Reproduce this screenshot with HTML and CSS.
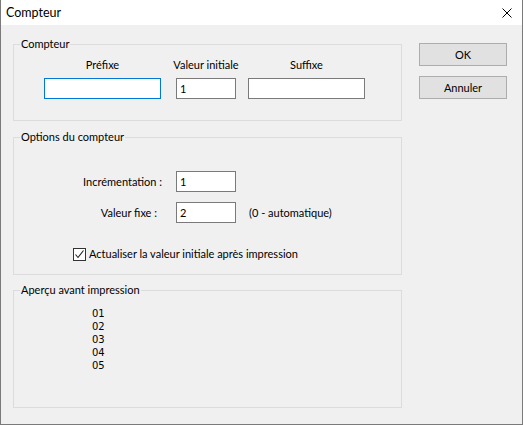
FILE: index.html
```html
<!DOCTYPE html>
<html lang="fr">
<head>
<meta charset="utf-8">
<title>Compteur</title>
<link rel="stylesheet" href="styles.css">
</head>
<body>
<div class="window">
  <div class="titlebar">
    <span class="title">Compteur</span>
    <svg class="close" width="10" height="10" viewBox="0 0 10 10"><path d="M0.5 0.5 L9.5 9.5 M9.5 0.5 L0.5 9.5" stroke="#000" stroke-width="1" fill="none"/></svg>
  </div>
  <div class="client">
    <div class="groups">
      <fieldset class="group g1">
        <legend>Compteur</legend>
        <div class="fields">
          <div class="field wide">
            <span class="flabel">Préfixe</span>
            <div class="edit focus"></div>
          </div>
          <div class="field narrow">
            <span class="flabel">Valeur initiale</span>
            <div class="edit">1</div>
          </div>
          <div class="field wide">
            <span class="flabel">Suffixe</span>
            <div class="edit"></div>
          </div>
        </div>
      </fieldset>
      <fieldset class="group g2">
        <legend>Options du compteur</legend>
        <div class="opts">
          <span class="olabel">Incrémentation :</span>
          <div class="edit">1</div>
          <span></span>
          <span class="olabel l2">Valeur fixe :</span>
          <div class="edit">2</div>
          <span class="hint">(0 - automatique)</span>
        </div>
        <div class="check">
          <span class="box"><svg width="11" height="11" viewBox="0 0 11 11"><path d="M1.5 5.5 L4 8.5 L9.5 1.5" stroke="#222" stroke-width="1.1" fill="none"/></svg></span>
          <span>Actualiser la valeur initiale après impression</span>
        </div>
      </fieldset>
      <fieldset class="group g3">
        <legend>Aperçu avant impression</legend>
        <div class="preview">
          <div>01</div>
          <div>02</div>
          <div>03</div>
          <div>04</div>
          <div>05</div>
        </div>
      </fieldset>
    </div>
    <div class="buttons">
      <div class="btn">OK</div>
      <div class="btn">Annuler</div>
    </div>
  </div>
</div>
</body>
</html>
```
FILE: styles.css
```css
html, body {
  margin: 0;
  padding: 0;
}
body {
  width: 523px;
  height: 425px;
  overflow: hidden;
  font-family: "Lato", "Liberation Sans", sans-serif;
  font-size: 11px;
  color: #000;
}
.window {
  box-sizing: border-box;
  width: 523px;
  height: 425px;
  border: 1px solid #7a7a7a;
  border-top: none;
  background: #f0f0f0;
  display: flex;
  flex-direction: column;
}
.titlebar {
  height: 25px;
  background: #fff;
  display: flex;
  align-items: center;
  justify-content: space-between;
  padding: 0 10px 0 5px;
}
.title {
  font-size: 12.5px;
  line-height: 16px;
  margin-top: 1px;
}
.close {
  display: block;
  margin-top: 1px;
}
.client {
  display: flex;
  padding-left: 12px;
  gap: 17px;
}
.groups {
  display: flex;
  flex-direction: column;
  width: 389px;
}
.group {
  box-sizing: border-box;
  width: 389px;
  margin: 0;
  border: 1px solid #dcdcdc;
  padding: 0;
  min-inline-size: 0;
}
.group legend {
  margin-left: 6px;
  padding: 0 1px;
  line-height: 14px;
  font-size: 11px;
}
.g1 {
  margin-top: 12px;
  padding: 6px 0 21px 0;
}
.g2 {
  margin-top: 9px;
  padding: 27px 0 12px 0;
}
.g3 {
  margin-top: 8px;
  padding: 10px 0 35px 0;
}
.fields {
  display: flex;
  margin-left: 30px;
}
.field {
  display: flex;
  flex-direction: column;
  align-items: center;
}
.field.wide { width: 117px; }
.field.narrow { width: 60px; margin: 0 12px 0 15px; }
.flabel {
  line-height: 16px;
  margin-bottom: 5px;
  white-space: nowrap;
}
.edit {
  box-sizing: border-box;
  width: 100%;
  height: 21px;
  background: #fff;
  border: 1px solid #7a7a7a;
  padding: 0 3px;
  line-height: 19px;
}
.edit.focus {
  border-color: #0078d7;
}
.opts {
  display: grid;
  grid-template-columns: 148px 60px auto;
  column-gap: 14px;
  row-gap: 10px;
  align-items: center;
}
.opts .edit { width: 60px; }
.olabel {
  text-align: right;
  white-space: nowrap;
}
.olabel.l2 { padding-right: 5px; }
.hint { margin-left: -1px; }
.check {
  display: flex;
  align-items: center;
  gap: 3px;
  margin: 23px 0 0 59px;
  line-height: 16px;
}
.box {
  box-sizing: border-box;
  width: 13px;
  height: 13px;
  border: 1px solid #333;
  background: #fff;
  display: flex;
  align-items: center;
  justify-content: center;
}
.box svg { display: block; }
.preview {
  margin-left: 78px;
  font-family: "DejaVu Sans", sans-serif;
  font-size: 10px;
  line-height: 13px;
}
.buttons {
  display: flex;
  flex-direction: column;
  gap: 10px;
  padding-top: 18px;
}
.btn {
  box-sizing: border-box;
  width: 88px;
  height: 23px;
  background: #e1e1e1;
  border: 1px solid #adadad;
  display: flex;
  align-items: center;
  justify-content: center;
}
```
